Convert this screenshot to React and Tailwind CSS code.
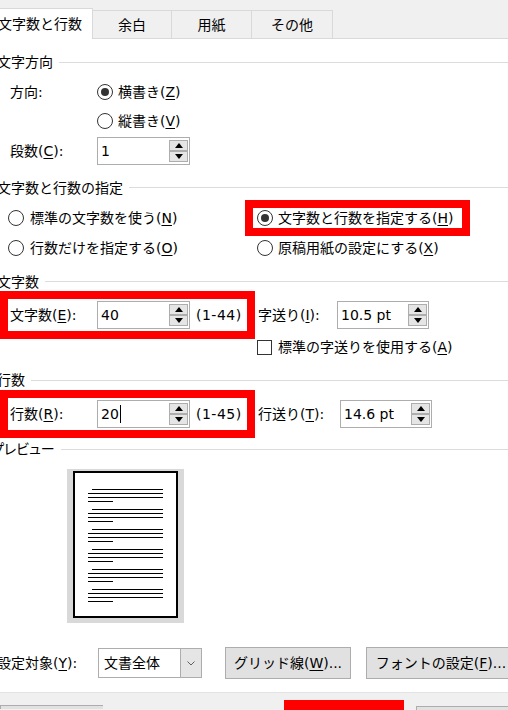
import React from "react";

function U({ children }) {
  return <span className="underline decoration-1 underline-offset-[2px]">{children}</span>;
}

function Radio({ checked }) {
  return (
    <div className="w-[16px] h-[16px] rounded-full border border-[#333333] bg-white flex items-center justify-center shrink-0">
      {checked && <div className="w-[8px] h-[8px] rounded-full bg-[#333333]" />}
    </div>
  );
}

function Heading({ children, h = "h-[18px]", shift = "ml-[-3px]", extra = "" }) {
  return (
    <div className={`flex items-center ${h}`}>
      <span className={`whitespace-nowrap leading-none ${shift} ${extra}`}>{children}</span>
      <div className="flex-1 h-px bg-[#dcdcdc] ml-[6px]" />
    </div>
  );
}

function SpinBtn({ up }) {
  return (
    <div className="w-[19px] h-[11px] border border-[#adadad] bg-[#e5e5e5] flex items-center justify-center">
      <svg width="8" height="5" viewBox="0 0 8 5">
        {up ? <polygon points="0,5 8,5 4,0" fill="#000" /> : <polygon points="0,0 8,0 4,5" fill="#000" />}
      </svg>
    </div>
  );
}

function Spin({ value, w, caret }) {
  return (
    <div className={`flex h-[28px] border border-[#adadad] bg-white shrink-0 ${w}`}>
      <div className="flex-1 flex items-center pl-[3px] leading-none whitespace-nowrap">
        {value}
        {caret && <span className="inline-block w-px h-[18px] bg-black ml-[1px]" />}
      </div>
      <div className="flex flex-col my-[2px] mr-[1px]">
        <SpinBtn up />
        <SpinBtn />
      </div>
    </div>
  );
}

function PreviewPage() {
  const groups = [18, 38, 58, 78, 98, 118];
  return (
    <svg width="105" height="147" viewBox="0 0 105 147" shapeRendering="crispEdges">
      <rect x="1" y="1" width="103" height="145" fill="#fff" stroke="#000" strokeWidth="2" />
      {groups.map((g) => (
        <g key={g} fill="#000">
          <rect x="19" y={g} width="71" height="1" />
          <rect x="15" y={g + 4} width="75" height="1" />
          <rect x="15" y={g + 8} width="75" height="1" />
          <rect x="15" y={g + 12} width="25" height="1" />
        </g>
      ))}
    </svg>
  );
}

export default function App() {
  return (
    <div className="w-[508px] h-[710px] overflow-hidden bg-white flex flex-col text-[14px] text-black font-['DejaVu_Sans','Noto_Sans_CJK_JP',sans-serif]">
      {/* Tabs */}
      <div className="h-[39px] bg-[#f0f0f0] flex items-end shrink-0">
        <div className="w-[93px] h-[31px] bg-white border-t border-r border-[#d9d9d9] flex items-center shrink-0">
          <span className="ml-[-2px] whitespace-nowrap leading-none">文字数と行数</span>
        </div>
        <div className="w-[79px] h-[29px] border-t border-r border-b border-[#d9d9d9] flex items-center justify-center shrink-0 leading-none">余白</div>
        <div className="w-[80px] h-[29px] border-t border-r border-b border-[#d9d9d9] flex items-center justify-center shrink-0 leading-none">用紙</div>
        <div className="w-[81px] h-[29px] border-t border-r border-b border-[#d9d9d9] flex items-center justify-center shrink-0 leading-none">その他</div>
        <div className="flex-1 border-b border-[#d9d9d9]" />
      </div>

      {/* 文字方向 */}
      <div className="mt-[13px]">
        <Heading h="h-[20px]">文字方向</Heading>
      </div>
      <div className="mt-[9px] h-[24px] flex items-center">
        <div className="w-[97px] pl-[10px] shrink-0 leading-none">方向:</div>
        <Radio checked />
        <span className="ml-[5px] leading-none whitespace-nowrap">
          横書き(<U>Z</U>)
        </span>
      </div>
      <div className="mt-[6px] h-[24px] flex items-center pl-[97px]">
        <Radio />
        <span className="ml-[5px] leading-none whitespace-nowrap">
          縦書き(<U>V</U>)
        </span>
      </div>
      <div className="mt-[4px] h-[28px] flex items-center">
        <div className="w-[97px] pl-[10px] shrink-0 leading-none whitespace-nowrap">
          段数(<U>C</U>):
        </div>
        <Spin value="1" w="w-[93px]" />
      </div>

      {/* 文字数と行数の指定 */}
      <div className="mt-[13px]">
        <Heading h="h-[20px]">文字数と行数の指定</Heading>
      </div>
      <div className="mt-[2px] flex">
        <div className="w-[245px] shrink-0 flex flex-col">
          <div className="h-[36px] flex items-center pl-[8px]">
            <Radio />
            <span className="ml-[6px] leading-none whitespace-nowrap">
              標準の文字数を使う(<U>N</U>)
            </span>
          </div>
          <div className="h-[24px] flex items-center pl-[8px]">
            <Radio />
            <span className="ml-[6px] leading-none whitespace-nowrap">
              行数だけを指定する(<U>O</U>)
            </span>
          </div>
        </div>
        <div className="flex flex-col">
          <div className="w-[225px] h-[36px] border-[8px] border-[#ff0000] flex items-center pl-[4px]">
            <Radio checked />
            <span className="ml-[5px] leading-none whitespace-nowrap">
              文字数と行数を指定する(<U>H</U>)
            </span>
          </div>
          <div className="h-[24px] flex items-center pl-[12px]">
            <Radio />
            <span className="ml-[5px] leading-none whitespace-nowrap">
              原稿用紙の設定にする(<U>X</U>)
            </span>
          </div>
        </div>
      </div>

      {/* 文字数 */}
      <div className="mt-[13px]">
        <Heading>文字数</Heading>
      </div>
      <div className="h-[48px] flex items-center">
        <div className="w-[255px] h-[48px] border-[8px] border-[#ff0000] flex items-center pl-[2px] shrink-0">
          <div className="w-[87px] shrink-0 leading-none whitespace-nowrap">
            文字数(<U>E</U>):
          </div>
          <Spin value="40" w="w-[93px]" />
          <span className="ml-[6px] leading-none whitespace-nowrap tracking-[0.5px]">(1-44)</span>
        </div>
        <div className="ml-[3px] w-[79px] shrink-0 leading-none whitespace-nowrap">
          字送り(<U>I</U>):
        </div>
        <Spin value="10.5 pt" w="w-[92px]" />
      </div>
      <div className="h-[18px] flex items-center pl-[257px]">
        <div className="w-[15px] h-[15px] border border-[#333333] bg-white shrink-0" />
        <span className="ml-[6px] leading-none whitespace-nowrap">
          標準の字送りを使用する(<U>A</U>)
        </span>
      </div>

      {/* 行数 */}
      <div className="mt-[15px]">
        <Heading>行数</Heading>
      </div>
      <div className="mt-[1px] h-[48px] flex items-center">
        <div className="w-[255px] h-[48px] border-[8px] border-[#ff0000] flex items-center pl-[2px] shrink-0">
          <div className="w-[87px] shrink-0 leading-none whitespace-nowrap">
            行数(<U>R</U>):
          </div>
          <Spin value="20" w="w-[93px]" caret />
          <span className="ml-[6px] leading-none whitespace-nowrap tracking-[0.5px]">(1-45)</span>
        </div>
        <div className="ml-[3px] w-[82px] shrink-0 leading-none whitespace-nowrap">
          行送り(<U>T</U>):
        </div>
        <Spin value="14.6 pt" w="w-[92px]" />
      </div>

      {/* プレビュー */}
      <div className="mt-[2px]">
        <Heading shift="ml-[-9px]" extra="[font-feature-settings:'palt']">プレビュー</Heading>
      </div>
      <div className="mt-[11px] ml-[67px] w-[117px] h-[154px] bg-[#d9d9d9] pt-[2px] px-[6px] shrink-0">
        <PreviewPage />
      </div>

      {/* bottom row */}
      <div className="mt-[24px] h-[32px] flex items-center shrink-0">
        <div className="w-[98px] shrink-0">
          <span className="ml-[-3px] leading-none whitespace-nowrap inline-block">
            設定対象(<U>Y</U>):
          </span>
        </div>
        <div className="w-[104px] h-[30px] border border-[#adadad] flex bg-white shrink-0">
          <div className="flex-1 flex items-center pl-[5px] leading-none">文書全体</div>
          <div className="w-[21px] bg-[#e5e5e5] border-l border-[#adadad] flex items-center justify-center">
            <svg width="8" height="5" viewBox="0 0 8 5">
              <polyline points="0.5,0.5 4,4 7.5,0.5" fill="none" stroke="#606060" strokeWidth="1" />
            </svg>
          </div>
        </div>
        <div className="ml-[23px] w-[126px] h-[32px] bg-[#e1e1e1] border border-[#adadad] flex items-center justify-center shrink-0 leading-none whitespace-nowrap">
          グリッド線(<U>W</U>)...
        </div>
        <div className="ml-[15px] w-[150px] h-[32px] bg-[#e1e1e1] border border-[#adadad] flex items-center justify-center shrink-0 leading-none whitespace-nowrap">
          フォントの設定(<U>F</U>)...
        </div>
      </div>

      {/* bottom gray bar */}
      <div className="mt-[13px] flex-1 bg-[#f0f0f0] border-t border-[#e3e3e3] flex items-start">
        <div className="mt-[12px] w-[103px] h-[4px] border-t border-l border-[#adadad] bg-[#e1e1e1] shrink-0" />
        <div className="mt-[7px] ml-[181px] w-[120px] h-[10px] bg-[#ff0000] shrink-0" />
        <div className="mt-[13px] ml-[12px] w-[100px] h-[4px] border-t border-l border-[#adadad] bg-[#e1e1e1] shrink-0" />
      </div>
    </div>
  );
}
